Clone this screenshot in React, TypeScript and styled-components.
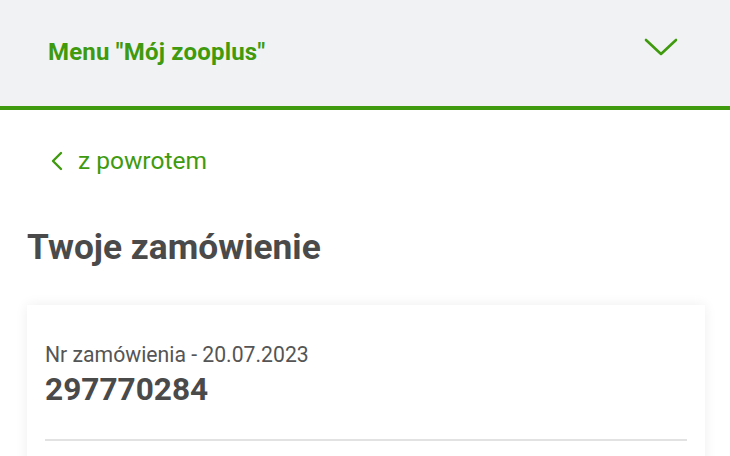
import React from "react"
import styled, { createGlobalStyle } from "styled-components"

const GlobalStyle = createGlobalStyle`
    body {
        margin: 0;
        background: #ffffff;
        font-family: Roboto, "Liberation Sans", Arial, sans-serif;
    }
`

const green = "#3f9a0e"

const Header = styled.header`
    height: 106px;
    padding: 0 52px 0 48px;
    display: flex;
    align-items: center;
    justify-content: space-between;
    background: #f1f2f4;
    border-bottom: 4px solid ${green};
`
const HeaderTitle = styled.span`
    font-weight: 700;
    font-size: 24px;
    letter-spacing: 0.2px;
    color: ${green};
    margin-top: -2px;
`
const Toggle = styled.svg`
    width: 34px;
    height: 20px;
    margin-top: -12px;
`

const Main = styled.main`
    padding: 36px 25px 0 27px;
`
const BackLink = styled.a`
    display: flex;
    align-items: center;
    gap: 14px;
    padding-left: 23px;
    font-size: 24.5px;
    color: ${green};
    text-decoration: none;
`
const Title = styled.h1`
    margin: 52px 0 0;
    font-size: 35.3px;
    font-weight: 700;
    color: #4a4a4a;
    line-height: 40px;
`
const Card = styled.section`
    margin-top: 38px;
    padding: 38px 18px 0;
    background: #ffffff;
    box-shadow: 0 0 12px rgba(0, 0, 0, 0.07);
    height: 200px;
`
const OrderLabel = styled.div`
    font-size: 21.2px;
    color: #555555;
    line-height: 24px;
`
const OrderNumber = styled.div`
    margin-top: 4px;
    font-size: 31.6px;
    font-weight: 700;
    color: #4a4a4a;
    line-height: 38px;
`
const Divider = styled.hr`
    margin: 30px 0 0;
    border: none;
    border-top: 2px solid #e2e2e2;
`

export default function App() {
    return (
        <>
            <GlobalStyle />
            <Header>
                <HeaderTitle>Menu "Mój zooplus"</HeaderTitle>
                <Toggle viewBox="0 0 34 20" fill="none">
                    <path d="M2 3 L17 17 L32 3" stroke={green} strokeWidth="2.6" strokeLinecap="round" strokeLinejoin="round" />
                </Toggle>
            </Header>
            <Main>
                <BackLink href="#">
                    <svg width="14" height="20" viewBox="0 0 14 20" fill="none">
                        <path d="M11 2 L3 10 L11 18" stroke={green} strokeWidth="2.4" strokeLinecap="round" strokeLinejoin="round" />
                    </svg>
                    z powrotem
                </BackLink>
                <Title>Twoje zamówienie</Title>
                <Card>
                    <OrderLabel>Nr zamówienia - 20.07.2023</OrderLabel>
                    <OrderNumber>297770284</OrderNumber>
                    <Divider />
                </Card>
            </Main>
        </>
    )
}
